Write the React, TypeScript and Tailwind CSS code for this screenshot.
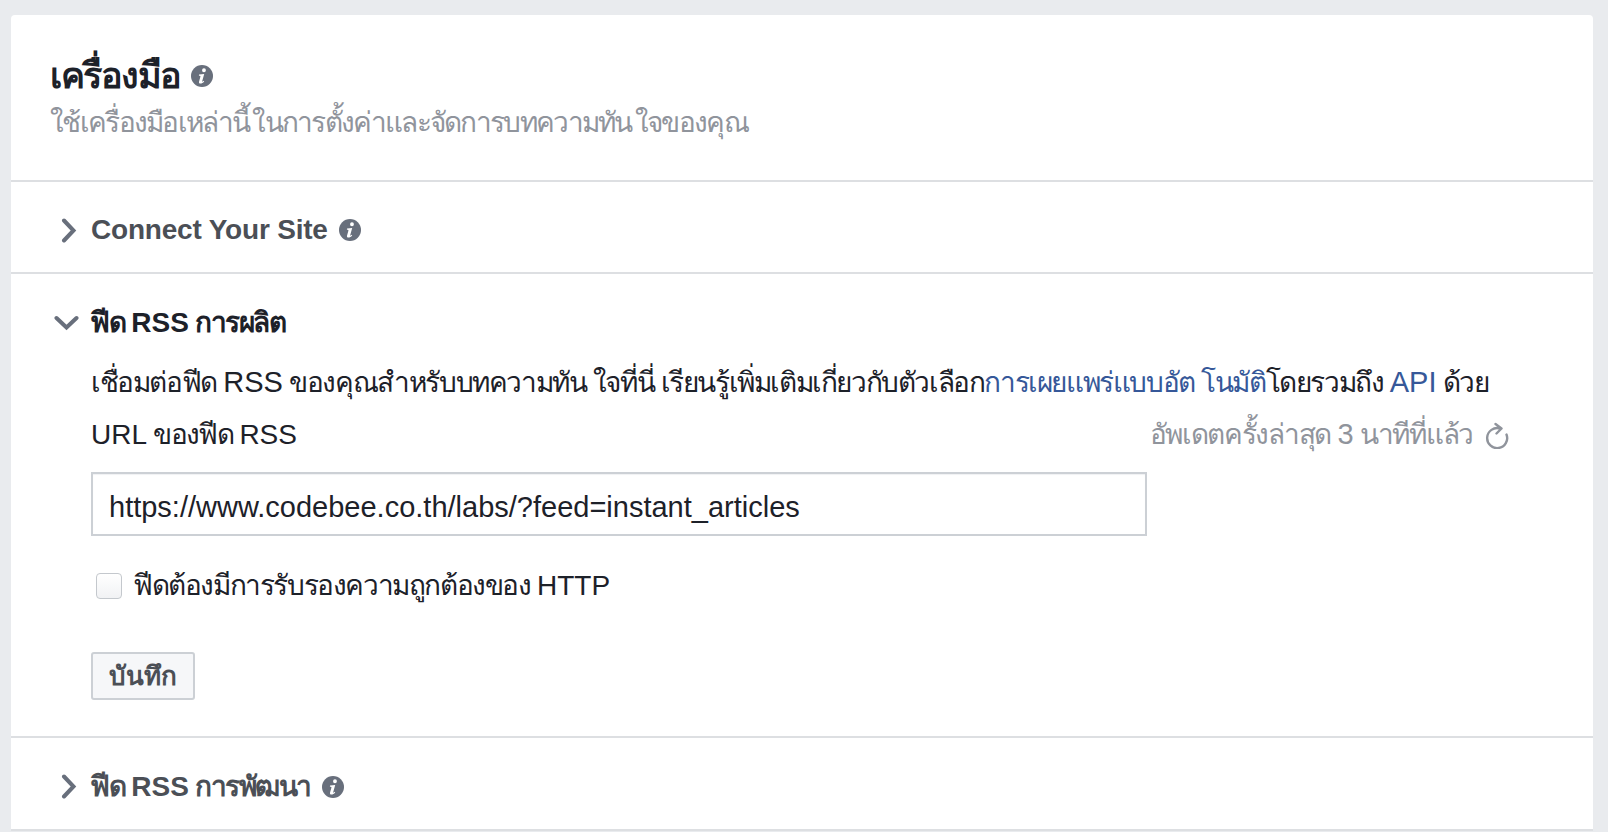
import React from 'react';

const InfoIcon = ({ className }: { className: string }) => (
  <svg className={className} viewBox="0 0 24 24">
    <circle cx="12" cy="12" r="12" fill="#686f7c" />
    <path d="M14.2 3.6a2.1 2.1 0 1 1-.1 4.2 2.1 2.1 0 0 1 .1-4.2zM8.8 10.4l5.6-.7-2.2 8c-.1.5.3.6.7.3l1-.8.5.7c-1.4 1.5-2.8 2.3-4.1 2.3-1.4 0-1.9-.9-1.5-2.3l1.5-5.3c.1-.5-.1-.8-.6-.8H8.600z" fill="#ffffff" />
  </svg>
);

const Chevron = ({ down }: { down?: boolean }) => (
  <svg className={down ? 'w-[25px] h-[16px]' : 'w-[16px] h-[25px]'} viewBox={down ? '0 0 25 16' : '0 0 16 25'} fill="none" stroke="#686f7c" strokeWidth="4" strokeLinecap="round">
    <path d={down ? 'M2.500 3l10 9.500 10-9.500' : 'M3 2.500l9.500 10-9.500 10'} />
  </svg>
);

// latin runs sit a bit larger than the thai around them
const Latin = ({ children, className }: { children: React.ReactNode; className?: string }) => (
  <span className={`tracking-normal ${className ?? 'text-[29px]'}`}>{children}</span>
);

export default function App() {
  return (
    <div className="h-[832px] overflow-hidden bg-[#e9ebee] pt-[15px] pl-[11px] pr-[15px] font-['Liberation_Sans','Noto_Sans','DejaVu_Sans',sans-serif] text-[#1d2129]">
      <div className="bg-white rounded-t-[4px]">
        <div className="h-[167px] border-b-2 border-[#dddfe2] pl-[39px] pt-[39px]">
          <div className="flex items-center gap-[10px]">
            <h1 className="text-[36px] leading-[44px] font-bold tracking-[-1.5px]">เครื่องมือ</h1>
            <InfoIcon className="w-[22px] h-[22px]" />
          </div>
          <p className="mt-[7px] text-[28px] leading-[36px] text-[#90949c] tracking-[-1.7px] [word-spacing:-3px]">ใช้เครื่องมือเหล่านี้ ในการตั้งค่าและจัดการบทความทัน ใจของคุณ</p>
        </div>

        <div className="h-[92px] border-b-2 border-[#dddfe2] flex items-center pl-[50px] pt-[6px] gap-[14px]">
          <Chevron />
          <span className="text-[28px] font-bold text-[#4b4f56] tracking-[-0.2px]">Connect Your Site</span>
          <InfoIcon className="w-[22px] h-[22px] -ml-[3px]" />
        </div>

        <div className="h-[464px] border-b-2 border-[#dddfe2]">
          <div className="flex items-center pt-[31px] pl-[43px] gap-[11px]">
            <Chevron down />
            <span className="text-[28px] leading-[36px] font-bold tracking-[-1.500px]">ฟีด <Latin className="text-[28px]">RSS</Latin> การผลิต</span>
          </div>
          <div className="pl-[80px] pr-[84px]">
            <p className="mt-[21px] h-[40px] text-[28px] leading-[40px] tracking-[-1.4px] whitespace-nowrap">
              เชื่อมต่อฟีด <Latin>RSS</Latin> ของคุณสำหรับบทความทัน ใจที่นี่ เรียนรู้เพิ่มเติมเกี่ยวกับตัวเลือก<a className="text-[#365899]">การเผยแพร่แบบอัต โนมัติ</a>โดยรวมถึง <a className="text-[#365899]"><Latin>API</Latin></a> ด้วย
            </p>
            <div className="flex justify-between items-center mt-[13px] h-[40px] text-[28px]">
              <span className="tracking-[-1.6px]"><Latin className="text-[28px]">URL</Latin> ของฟีด <Latin className="text-[28px]">RSS</Latin></span>
              <span className="flex items-center gap-[12px] text-[#90949c] tracking-[-1.3px]">
                <span>อัพเดตครั้งล่าสุด <Latin>3</Latin> นาทีที่แล้ว</span>
                <svg className="w-[24px] h-[27px]" viewBox="0 0 24 27" fill="none" stroke="#90949c" strokeWidth="2.400" strokeLinecap="round" strokeLinejoin="round">
                  <path d="M15 6.500A10 10 0 1 0 21.500 12.500M10.500 2l6 4.500-5 5" />
                </svg>
              </span>
            </div>
            <div className="mt-[17px] w-[1056px] h-[64px] border-2 border-[#ccd0d5] shadow-[inset_0_1px_1px_#f0f1f3] flex items-center pl-[16px] pt-[7px] text-[29px]">
              https://www.codebee.co.th/labs/?feed=instant_articles
            </div>
            <label className="mt-[29px] flex items-center gap-[11px] text-[28px] tracking-[-1.4px] pl-[5px]">
              <span className="w-[26px] h-[26px] rounded-[4px] border border-[#c4c8cd] bg-linear-to-b from-white to-[#f1f2f4]" />
              <span>ฟีดต้องมีการรับรองความถูกต้องของ <Latin className="text-[28px]">HTTP</Latin></span>
            </label>
            <button className="mt-[45px] w-[104px] h-[48px] rounded-[3px] border-2 border-[#ccd0d5] bg-[#f6f7f9] text-[26px] font-bold text-[#4b4f56]">บันทึก</button>
          </div>
        </div>

        <div className="h-[93px] border-b-2 border-[#dddfe2] flex items-center pl-[50px] pt-[6px] gap-[13px]">
          <Chevron />
          <span className="text-[28px] font-bold text-[#4b4f56] tracking-[-1.5px]">ฟีด <Latin className="text-[28px]">RSS</Latin> การพัฒนา</span>
          <InfoIcon className="w-[22px] h-[22px] -ml-[2px]" />
        </div>
      </div>
    </div>
  );
}
